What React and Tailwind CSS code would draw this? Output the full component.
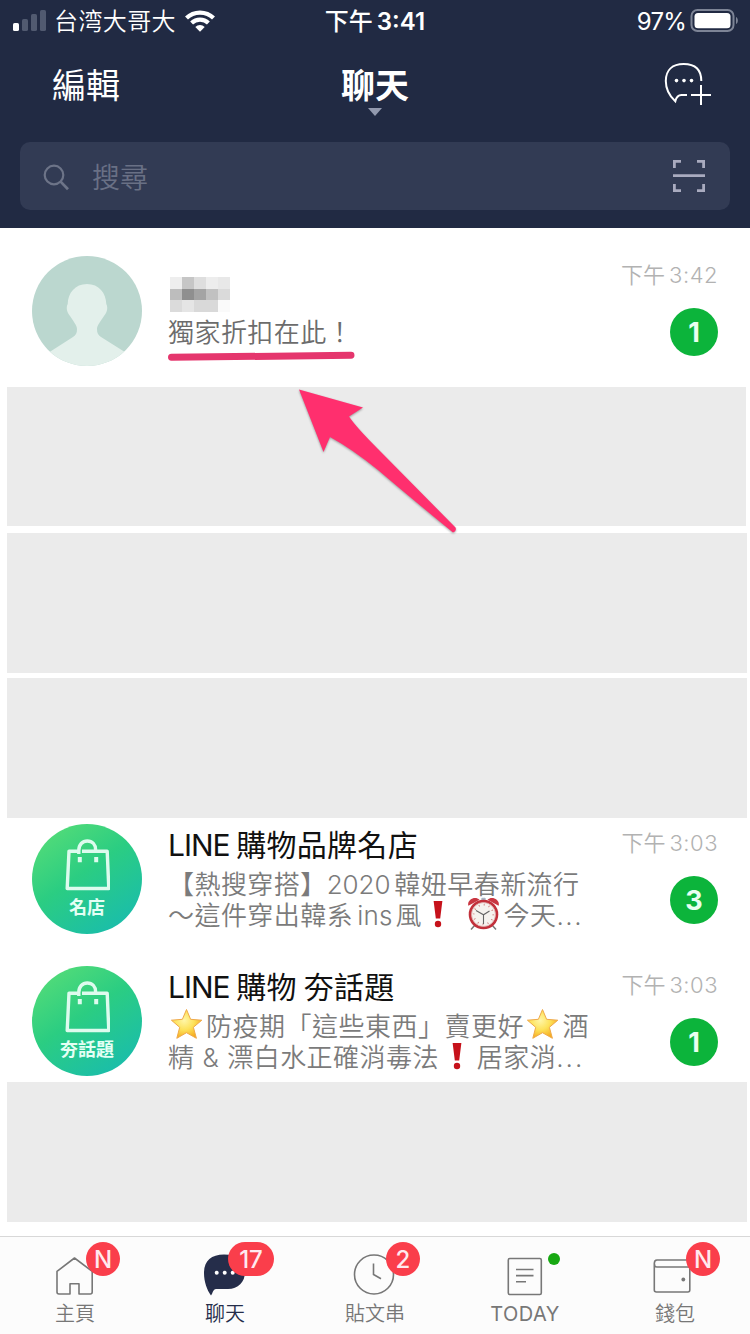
import React from "react";

const Star = () => (
  <svg className="inline-block h-[33px] w-[33px] shrink-0" viewBox="0 0 33 33" role="img" aria-label="star">
    <defs>
      <radialGradient id="starFill" cx="0.42" cy="0.38" r="0.65">
        <stop offset="0" stopColor="#fff6a8" />
        <stop offset="0.5" stopColor="#fde25a" />
        <stop offset="1" stopColor="#f5a91b" />
      </radialGradient>
    </defs>
    <path
      d="M16.5 1.5 L20.6 11.3 L31.8 12.2 L23.4 19.3 L26.4 30.3 L16.5 24.7 L6.8 30.3 L9.7 19.3 L1.4 12.2 L12.4 11.3Z"
      fill="url(#starFill)"
      stroke="#efa94a"
      strokeWidth="1"
      strokeLinejoin="round"
    />
  </svg>
);

const Bang = () => (
  <svg className="-mt-[3px] inline-block h-[28px] w-[12px] shrink-0" viewBox="0 0 12 28" role="img" aria-label="exclamation">
    <path d="M1.6 1 H10.4 L8.2 18.5 H3.8Z" fill="#c6121b" />
    <circle cx="6" cy="24" r="3.2" fill="#c6121b" />
  </svg>
);

const Clock = () => (
  <svg className="-mt-[4px] inline-block h-[34px] w-[33px] shrink-0" viewBox="0 0 33 34" role="img" aria-label="alarm clock">
    <path d="M8 28 L4 32.5 M25 28 L29 32.5" stroke="#777" strokeWidth="1.5" />
    <rect x="14.3" y="0.8" width="4.4" height="3" rx="1" fill="#a9b4c4" />
    <path d="M1.4 8.8 C-0.5 3 8 -1.5 12.5 2.8Z" fill="#c93641" />
    <path d="M31.6 8.8 C33.5 3 25 -1.5 20.5 2.8Z" fill="#c93641" />
    <circle cx="16.5" cy="17.5" r="14.8" fill="#c2303a" />
    <circle cx="16.5" cy="17.5" r="12" fill="#f6f3ef" stroke="#ddb0ae" strokeWidth="0.8" />
    <circle cx="16.5" cy="17.5" r="9.8" fill="none" stroke="#c9706f" strokeWidth="1.8" strokeDasharray="0.8 4.33" />
    <path d="M9 13.5 L16.5 17.8 L22.5 14 M16.5 17.8 V27" fill="none" stroke="#666" strokeWidth="1.1" />
  </svg>
);

const Bag = () => (
  <svg className="h-[52px] w-[46px]" viewBox="0 0 46 52" fill="none" stroke="#ddfbee" strokeWidth="3.4">
    <path d="M28 12.2 H43.2 L44.8 49.5 H3.2 L5 12.2 H13.5 M14.8 15 V11.5 C14.8 5.5 18.5 2 23.3 2 C28.3 2 31.6 5.5 31.6 10.8 M18 12.2 H32" strokeLinejoin="round" />
    <path d="M15.8 18 V23.2 M32.2 18 V23.2" strokeWidth="4" />
  </svg>
);

const ShopAvatar = ({ label }) => (
  <div className="flex h-[110px] w-[110px] shrink-0 flex-col items-center rounded-full bg-linear-[145deg,#54dc78_8%,#2bcd82_45%,#16b9b5_100%] pt-[15px]">
    <Bag />
    <span className="mt-[6px] text-[18px] leading-[22px] font-bold text-[#e4fff4]">{label}</span>
  </div>
);

const Person = () => (
  <svg className="h-[110px] w-[110px] shrink-0" viewBox="0 0 110 110">
    <defs>
      <clipPath id="round">
        <circle cx="55" cy="55" r="55" />
      </clipPath>
    </defs>
    <g clipPath="url(#round)">
      <rect width="110" height="110" fill="#bbd7cf" />
      <path
        d="M55 28 C67 28 74 37 74.3 48 C76 51 75.5 56 72 60 C69 65 65 69 65 73 C65 77 66 79 69 81 L96 98 L110 112 H0 L16 97 L41 81 C44 79 45 77 45 73 C45 69 41 65 38 60 C34.500 56 34 51 35.700 48 C36 37 43 28 55 28Z"
        fill="#e3f0eb"
      />
    </g>
  </svg>
);

const pixels = [
  "bg-[#eeeeee]", "bg-[#c6c6c6]", "bg-[#dedede]", "bg-[#ededed]", "bg-[#e8e8e8]",
  "bg-[#bdbdbd]", "bg-[#8f8f8f]", "bg-[#a4a4a4]", "bg-[#c1c1c1]", "bg-[#dadada]",
  "bg-[#dbdbdb]", "bg-[#e5e5e5]", "bg-[#d9d9d9]", "bg-[#d9d9d9]", "bg-[#fafafa]",
];

const Meta = ({ time, count }) => (
  <div className="ml-auto flex flex-col items-end">
    <div className="flex text-[22px] leading-[28px] font-[350] text-[#b2b2b2]">
      <span>下午</span>
      <span className="ml-[4px] tracking-[0.5px]">{time}</span>
    </div>
    <div className="mt-[19px] flex h-12 w-12 items-center justify-center rounded-full bg-[#0cb43b] pt-[2px] text-[27px] font-bold text-[#e9fff0]">
      {count}
    </div>
  </div>
);

const Hidden = ({ className }) => <div className={`ml-[6.5px] bg-[#ebebeb] ${className}`} />;

const Tab = ({ label, active, latin, children }) => (
  <div className="relative flex w-[150px] flex-col items-center pt-[13px]">
    {children}
    <span
      className={`text-[20px] leading-[28px] ${active ? "text-[#252d4a]" : "text-[#777]"} ${latin ? "text-[19.5px] tracking-[0.4px]" : "font-[350]"}`}
    >
      {label}
    </span>
  </div>
);

const Badge = ({ className, children }) => (
  <span className={`absolute top-[5px] flex h-[34px] items-center justify-center rounded-full bg-[#fa3e4b] pt-[2px] text-[24px] font-medium text-[#ffe9ef] ${className}`}>
    {children}
  </span>
);

export default function App() {
  return (
    <div className="relative flex h-[1334px] w-[750px] flex-col overflow-hidden bg-white font-['Inter','Noto_Sans_CJK_TC',sans-serif]">
      <header className="flex h-[228px] shrink-0 flex-col bg-[#212a43] text-white">
        <div className="grid h-10 grid-cols-3 items-center">
          <div className="flex items-center pl-[13px]">
            <svg className="h-[22px] w-[34px]" viewBox="0 0 34 22">
              <rect y="13" width="6" height="8" rx="1.6" fill="#fff" />
              <rect x="9" y="9" width="6" height="12" rx="1.600" fill="#515a70" />
              <rect x="18" y="4" width="6" height="17" rx="1.600" fill="#515a70" />
              <rect x="27" y="0" width="6" height="21" rx="1.600" fill="#515a70" />
            </svg>
            <span className="ml-[7px] pt-[2px] text-[24px] leading-10 font-[350] tracking-[0.4px]">台湾大哥大</span>
            <svg className="ml-[9px] h-[22px] w-[30px]" viewBox="0 0 30 22" fill="none" stroke="#fff" strokeWidth="4.2">
              <path d="M1.500 8 C8.800 0.800 21.200 0.800 28.500 8" />
              <path d="M6.600 13 C11.200 8.600 18.800 8.600 23.400 13" />
              <path d="M10.300 17 C13 14.300 17 14.300 19.700 17 L15 21.800Z" fill="#fff" stroke="none" />
            </svg>
          </div>
          <div className="flex justify-center pt-[2px] text-[24px]">
            <span className="font-medium">下午</span>
            <span className="ml-[4px] font-semibold">3:41</span>
          </div>
          <div className="flex items-center justify-end pr-[11px] text-[24px]">
            <span className="pt-[2px] tracking-[-0.800px]">97%</span>
            <svg className="ml-[4px] h-[24px] w-[49px]" viewBox="0 0 49 24">
              <rect x="1.500" y="1" width="42" height="21" rx="6" fill="none" stroke="#7d8496" strokeWidth="2" />
              <rect x="4.500" y="4" width="36" height="15.200" rx="3.500" fill="#fff" />
              <path d="M46 8 C48.500 9 48.500 14 46 15Z" fill="#7d8496" />
            </svg>
          </div>
        </div>
        <div className="grid h-[102px] grid-cols-3">
          <span className="pt-[24px] pl-[52px] text-[34px] leading-[44px]">編輯</span>
          <div className="flex flex-col items-center pt-[24px]">
            <span className="text-[34px] leading-[44px] font-bold">聊天</span>
            <svg className="h-2 w-4" viewBox="0 0 16 8">
              <path d="M1 0H15L8 8Z" fill="#9299ae" />
            </svg>
          </div>
          <div className="flex justify-end pt-5 pr-[34px]">
            <svg className="h-[48px] w-[56px]" viewBox="660 60 56 48" fill="none" stroke="#fff" strokeWidth="2">
              <path d="M701.300 81 C701.300 69.500 695 64 683.700 64 C672.500 64 665.800 70 665.800 81 C665.800 89 669 95.500 675.300 101.300 C676.200 97.500 678 95 681.500 95 H687" />
              <path d="M691 95 H711 M701 85 V105" />
              <g fill="#fff" stroke="none">
                <circle cx="676.500" cy="80.600" r="1.800" />
                <circle cx="684" cy="80.600" r="1.800" />
                <circle cx="691.500" cy="80.600" r="1.800" />
              </g>
            </svg>
          </div>
        </div>
        <div className="mx-5 flex h-[68px] items-center rounded-[10px] bg-[#323b54] pr-[25px] pl-[23px]">
          <svg className="mt-[2px] h-[27px] w-[27px]" viewBox="0 0 27 27" fill="none" stroke="#6d7488" strokeWidth="2.200">
            <circle cx="11" cy="11" r="9.300" />
            <path d="M17.600 17.600 L25 25.300" strokeWidth="2.700" />
          </svg>
          <span className="ml-[22px] pt-[3px] text-[28px] leading-9 font-[350] text-[#697085]">搜尋</span>
          <svg className="ml-auto h-[32px] w-[32px]" viewBox="0 0 32 32" fill="none" stroke="#a9abbf" strokeWidth="2.800">
            <path d="M1.400 8 V1.400 H8 M24 1.400 H30.600 V8 M30.600 24 V30.600 H24 M8 30.600 H1.400 V24 M0 15.600 H32" />
          </svg>
        </div>
      </header>

      <main className="flex h-[1008px] shrink-0 flex-col">
        <section className="flex h-[159px] pt-[28px] pr-[32px] pl-8">
          <Person />
          <div className="ml-[26px] pt-[21px]">
            <div className="ml-[1.5px] grid w-[60px] grid-cols-5">
              {pixels.map((p, i) => (
                <span key={i} className={`h-[11.7px] ${p}`} />
              ))}
            </div>
            <div className="mt-[5px] text-[26px] leading-[31px] font-[350] tracking-[0.45px] text-[#6c6c6c]">獨家折扣在此！</div>
          </div>
          <div className="-mt-[9px] ml-auto flex pt-[14px]">
            <Meta time="3:42" count="1" />
          </div>
        </section>
        <Hidden className="mr-[4px] h-[138.5px]" />
        <Hidden className="mt-[7.500px] mr-[3px] h-[139.500px]" />
        <Hidden className="mt-[5.500px] mr-[3px] h-[139.500px]" />
        <section className="flex h-[141.500px] pt-[6.500px] pr-[32px] pl-8">
          <ShopAvatar label="名店" />
          <div className="ml-[26px] w-[430px] shrink-0">
            <div className="flex text-[30px] leading-[43px] font-[370] text-[#111]">
              <span className="tracking-[-1px]">LINE</span>
              <span className="ml-[6.500px] tracking-[0.300px]">購物品牌名店</span>
            </div>
            <div className="mt-[2px] flex h-[31px] items-center text-[26px] leading-[31px] font-[350] text-[#7b7b7b]">
              <span className="tracking-[0.450px]">【熱搜穿搭】</span>
              <span className="tracking-[-0.100px]">2020</span>
              <span className="ml-[4px] tracking-[0.450px]">韓妞早春新流行</span>
            </div>
            <div className="flex h-[31px] items-center text-[26px] leading-[31px] font-[350] text-[#7b7b7b]">
              <span className="tracking-[0.450px]">～這件穿出韓系</span>
              <span className="ml-[4px] tracking-[0.200px]">ins</span>
              <span className="ml-[3px] mr-[10px]">風</span>
              <Bang />
              <span className="w-[23px]" />
              <Clock />
              <span className="ml-[4px] tracking-[0.450px]">今天</span>
              <span className="tracking-[1.500px]">...</span>
            </div>
          </div>
          <div className="-ml-[30px] flex grow pt-[5px]">
            <Meta time="3:03" count="3" />
          </div>
        </section>
        <section className="flex h-[123px] pt-[7px] pr-[32px] pl-8">
          <ShopAvatar label="夯話題" />
          <div className="ml-[26px] w-[430px] shrink-0">
            <div className="flex text-[30px] leading-[43px] font-[370] text-[#111]">
              <span className="tracking-[-1px]">LINE</span>
              <span className="ml-[6.500px] tracking-[0.300px]">購物</span>
              <span className="ml-[7px] tracking-[0.300px]">夯話題</span>
            </div>
            <div className="mt-[2px] flex h-[31px] items-center text-[26px] leading-[31px] font-[350] text-[#7b7b7b]">
              <span className="ml-[1.500px] -mt-[4px] flex"><Star /></span>
              <span className="ml-[3.500px] tracking-[0.500px]">防疫期「這些東西」賣更好</span>
              <span className="ml-[1.500px] -mt-[4px] flex"><Star /></span>
              <span className="ml-[4px]">酒</span>
            </div>
            <div className="flex h-[31px] items-center text-[26px] leading-[31px] font-[350] text-[#7b7b7b]">
              <span>精</span>
              <span className="mx-[8.500px]">&amp;</span>
              <span className="tracking-[0.450px]">漂白水正確消毒法</span>
              <span className="w-[12px]" />
              <Bang />
              <span className="ml-[14px] tracking-[0.450px]">居家消</span>
              <span className="tracking-[2px]">...</span>
            </div>
          </div>
          <div className="-ml-[30px] flex grow pt-[5px]">
            <Meta time="3:03" count="1" />
          </div>
        </section>
        <Hidden className="mr-[3px] h-[139.500px]" />
      </main>

      <nav className="flex h-[98px] shrink-0 border-t border-[#d8d8d8] bg-[#fcfcfc]">
        <Tab label="主頁">
          <svg className="h-[50px] w-[50px]" viewBox="50 1250 50 50" fill="none" stroke="#777" strokeWidth="1.600" strokeLinejoin="round">
            <path d="M57 1271.300 L74.500 1258 L92.200 1271.300 V1292 Q92.200 1294 90.200 1294 H79 V1283.800 H70 V1294 H59 Q57 1294 57 1292Z" />
          </svg>
          <Badge className="left-[86px] w-[34px]">N</Badge>
        </Tab>
        <Tab label="聊天" active>
          <svg className="h-[50px] w-[50px]" viewBox="200 1250 50 50">
            <path d="M224 1254.500 C238 1254.500 245 1262 245 1272 C245 1282 238 1289 228 1289 H216 C213 1289 213 1293 211 1295.500 C207 1290 204 1282 204 1273 C204 1261 211 1254.500 224 1254.500Z" fill="#252d4a" />
            <circle cx="216.700" cy="1272.700" r="2" fill="#fff" />
            <circle cx="224.700" cy="1272.700" r="2" fill="#fff" />
            <circle cx="232.700" cy="1272.700" r="2" fill="#fff" />
          </svg>
          <Badge className="left-[78px] w-[46px]">17</Badge>
        </Tab>
        <Tab label="貼文串">
          <svg className="h-[50px] w-[50px]" viewBox="350 1250 50 50" fill="none" stroke="#777" strokeWidth="1.600">
            <circle cx="374" cy="1274.500" r="19.500" />
            <path d="M373.500 1263.500 V1274.500 L381 1278.700" />
          </svg>
          <Badge className="left-[86px] w-[34px]">2</Badge>
        </Tab>
        <Tab label="TODAY" latin>
          <svg className="h-[50px] w-[50px]" viewBox="500 1250 50 50" fill="none" stroke="#777" strokeWidth="1.600">
            <rect x="508.300" y="1258.500" width="33" height="36" rx="1.500" />
            <path d="M516 1269.500 H533.500 M516 1275.600 H533.500 M516 1281.700 H526" />
          </svg>
          <span className="absolute top-4 left-[98px] h-3 w-3 rounded-full bg-[#17a812]" />
        </Tab>
        <Tab label="錢包">
          <svg className="h-[50px] w-[50px]" viewBox="650 1250 50 50" fill="none" stroke="#777" strokeWidth="1.600">
            <path d="M690 1260 H657 Q654.300 1260 654.300 1263.500 Q654.300 1267 657 1267 H689.800 V1290 Q689.800 1292 687.800 1292 H656.500 Q654.300 1292 654.300 1290 V1263.500" />
            <circle cx="683.300" cy="1279.500" r="1.900" fill="#777" stroke="none" />
          </svg>
          <Badge className="left-[86px] w-[34px]">N</Badge>
        </Tab>
      </nav>

      <svg className="pointer-events-none absolute top-[340px] left-[150px] h-[200px] w-[320px]" viewBox="150 340 320 200">
        <path d="M171.500 357.300 L351 355.300" stroke="#e5366d" strokeWidth="7" strokeLinecap="round" />
        <path
          d="M299 389.500 L363 407.500 L349 416.500 Q356 427 378 449 L455.500 527.500 Q457 531 453 532.500 Q412 499 378 470 Q352 449 330 437 L323.500 452Z"
          fill="#ff2f6e"
          className="drop-shadow-[0_1px_1px_rgba(0,0,0,0.35)]"
        />
      </svg>
    </div>
  );
}
